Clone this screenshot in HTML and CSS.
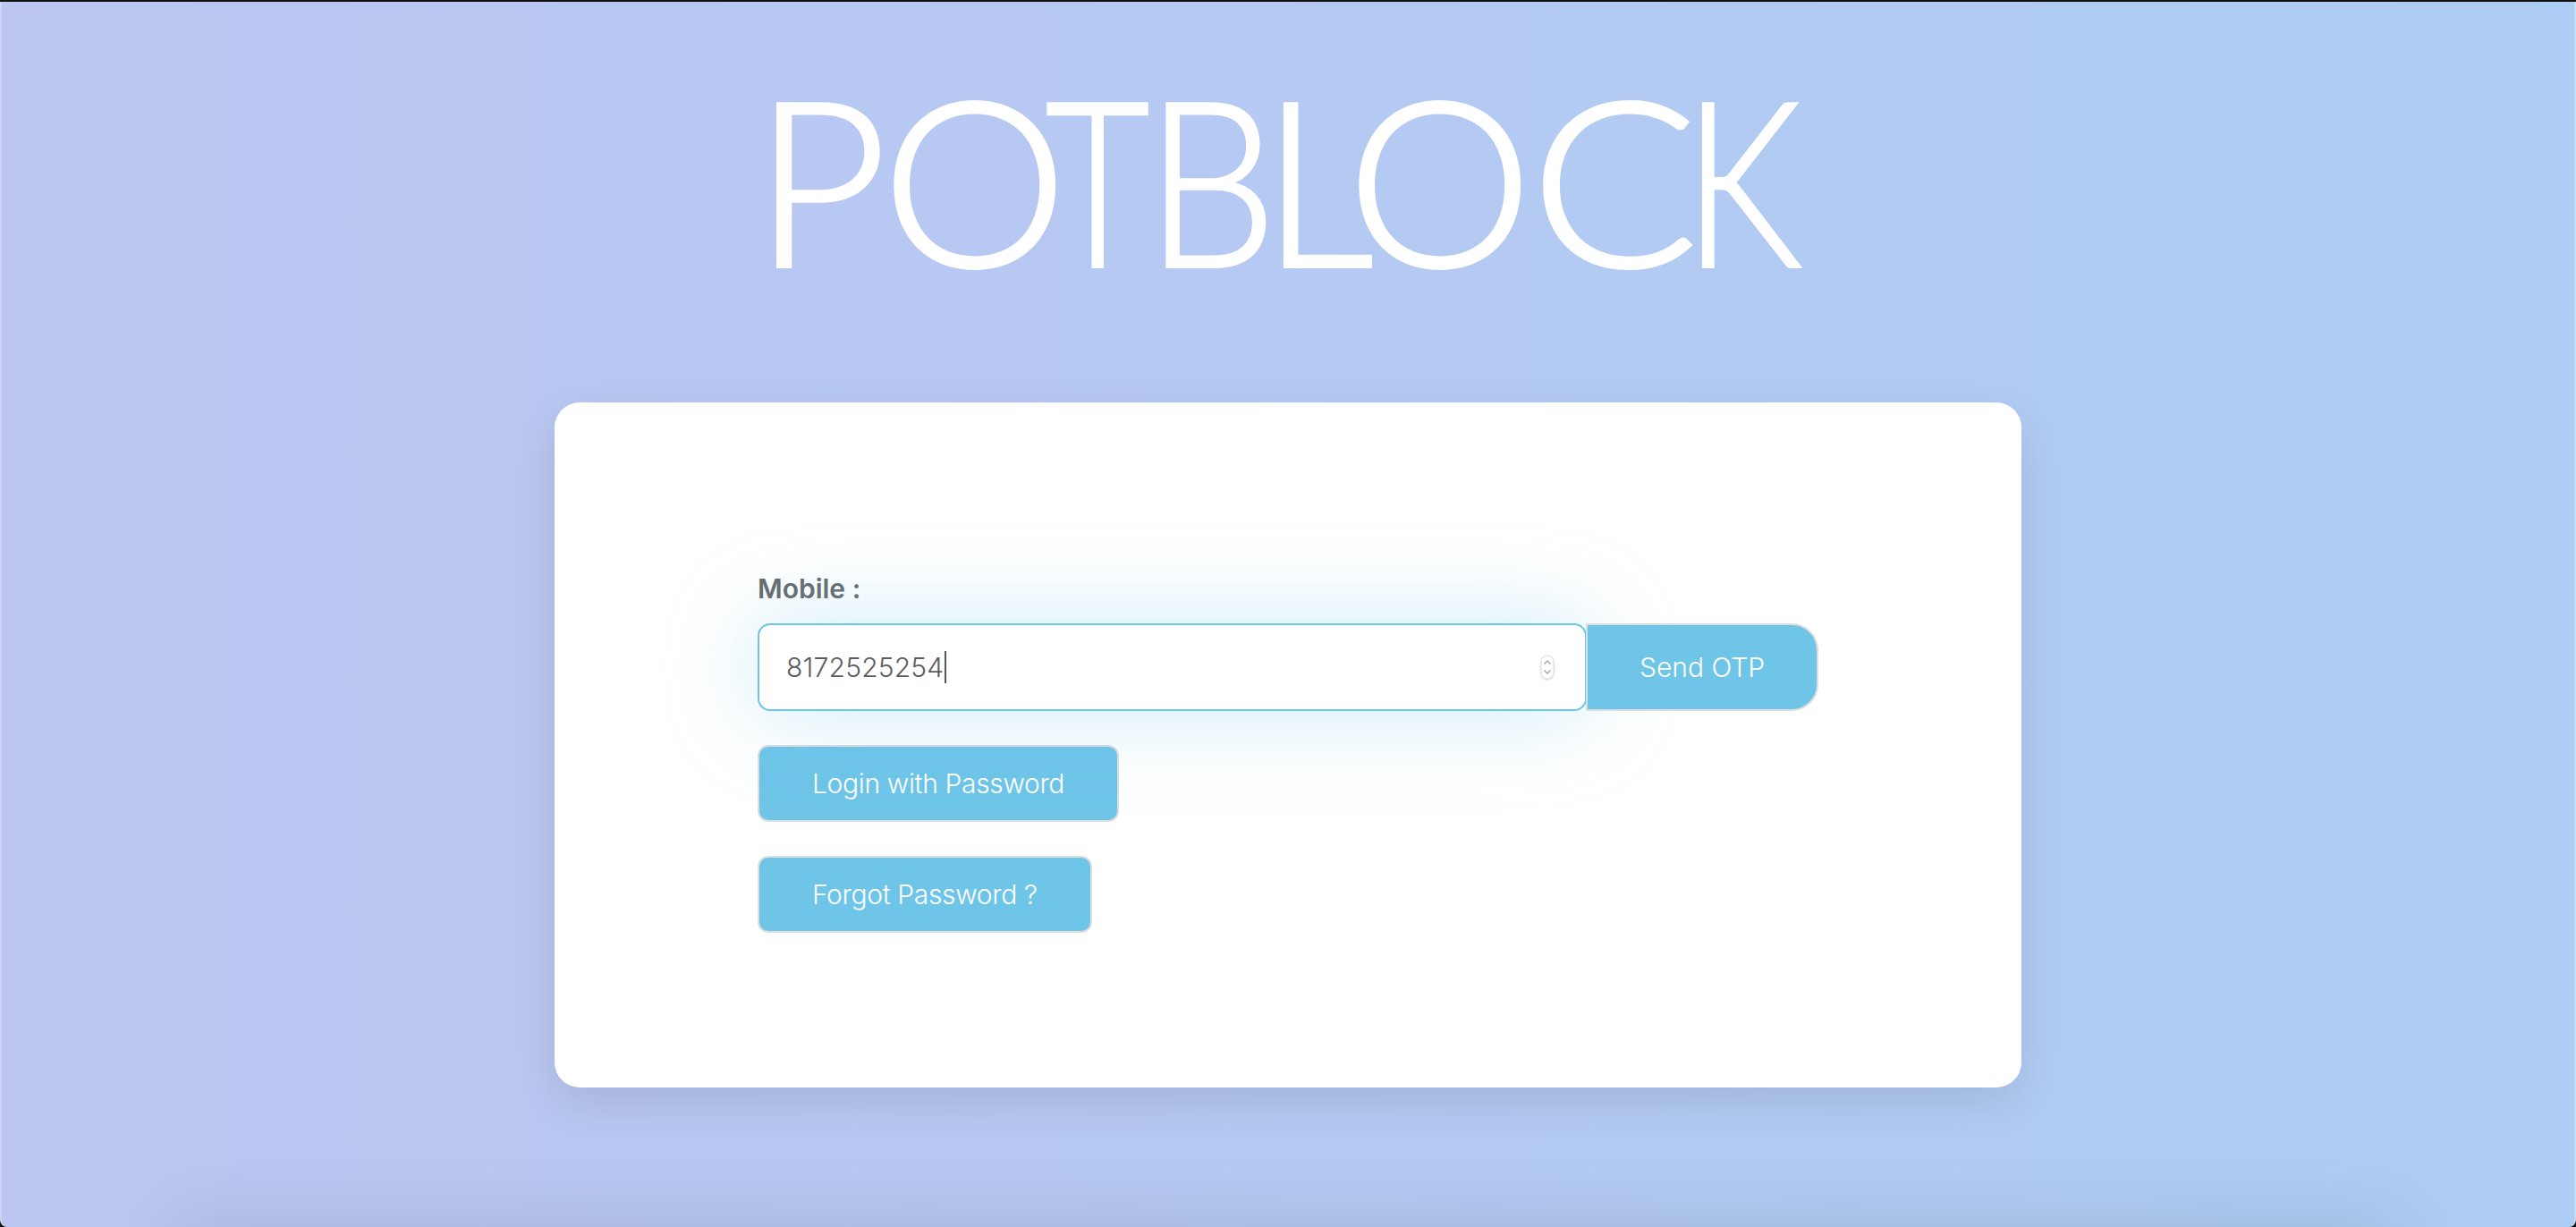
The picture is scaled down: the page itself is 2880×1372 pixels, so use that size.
FILE: index.html
```html
<!DOCTYPE html>
<html lang="en">
<head>
  <meta charset="UTF-8">
  <title>Potblock</title>
  <link rel="stylesheet" href="styles.css">
</head>
<body>
  <div class="page">
    <h1 class="brand"><span class="l-p">P</span><span class="l-o1">O</span><span class="l-t">T</span><span class="l-b">B</span><span class="l-l">L</span><span class="l-o2">O</span><span class="l-c">C</span><span class="l-k">K</span></h1>
    <div class="card">
      <label class="field-label">Mobile :</label>
      <div class="otp-row">
        <div class="mobile-input">
          <span class="mobile-value">8172525254</span><span class="caret"></span>
          <svg class="spinner" viewBox="0 0 16 28" width="16" height="28">
            <rect x="1" y="1" width="14" height="26" rx="7" fill="#fff" stroke="#dcdcdc" stroke-width="1"/>
            <path d="M4.500 10.500 8 7l3.500 3.500M4.500 17.500 8 21l3.500-3.500" fill="none" stroke="#a8a8a8" stroke-width="1.500"/>
          </svg>
        </div>
        <button class="btn btn-otp">Send OTP</button>
      </div>
      <button class="btn btn-block">Login with Password</button>
      <button class="btn btn-block">Forgot Password ?</button>
    </div>
    <div class="footer"></div>
  </div>
</body>
</html>
```

FILE: styles.css
```css
html, body {
  margin: 0;
  height: 100%;
  background: #111;
  overflow: hidden;
}
body {
  padding-top: 2px;
  box-sizing: border-box;
  font-family: Inter, "Liberation Sans", sans-serif;
}
.page {
  height: 100%;
  display: flex;
  flex-direction: column;
  align-items: center;
  overflow: hidden;
  border-left: 2px solid #cdd2f4;
  border-right: 2px solid #c3dbf7;
  border-radius: 0 0 8px 8px;
  box-sizing: border-box;
  background: linear-gradient(90deg, #bcc6f1, #aecdf4);
}
.brand {
  margin: 0;
  height: 448px;
  flex-shrink: 0;
  padding-left: 9px;
  line-height: 393px;
  font-family: Lato, sans-serif;
  font-size: 257px;
  font-weight: 300;
  color: #fff;
  -webkit-text-stroke: 4px #fff;
  white-space: nowrap;
}
.brand span {
  display: inline-block;
  transform-origin: left center;
}
.l-p { margin-right: -6px; }
.l-o1 { margin-right: -20px; transform: scaleX(1.02); }
.l-t { margin-right: -37px; transform: scaleX(0.78); }
.l-b { margin-right: -32px; transform: scaleX(0.9); }
.l-l { margin-right: -35px; transform: scaleX(0.96); }
.l-o2 { margin-right: 1px; transform: scaleX(1.02); }
.l-c { margin-right: -2px; transform: scaleX(1.08); }
.l-k { transform: scaleX(0.8); }
.card {
  width: 1640px;
  height: 766px;
  flex-shrink: 0;
  box-sizing: border-box;
  padding: 190px 227px 0;
  background: #fff;
  border-radius: 28px;
  box-shadow: 0 18px 50px rgba(0, 0, 0, 0.1);
}
.field-label {
  display: block;
  font-size: 30px;
  line-height: 36px;
  font-weight: 600;
  color: #666a6c;
  margin-bottom: 21px;
}
.otp-row {
  display: flex;
  height: 98px;
  margin-bottom: 38px;
}
.mobile-input {
  width: 927px;
  box-sizing: border-box;
  display: flex;
  align-items: center;
  padding: 0 34px 0 30px;
  background: #fff;
  border: 2px solid #6cc6e9;
  border-radius: 14px;
  box-shadow: 0 0 100px rgba(108, 198, 233, 0.35);
  font-size: 30px;
  font-weight: 300;
  letter-spacing: 0.2px;
  color: #5c5c5c;
}
.caret {
  width: 2px;
  height: 36px;
  margin-left: 1px;
  background: #555;
}
.spinner {
  margin-left: auto;
  filter: drop-shadow(0 1px 1px rgba(0, 0, 0, 0.15));
}
.btn {
  display: block;
  font-family: inherit;
  font-size: 30px;
  font-weight: 300;
  letter-spacing: -0.35px;
  color: #fff;
  background: #6ec5e8;
  border: 2px solid #ddd;
}
.btn-otp {
  width: 260px;
  margin-left: -1px;
  padding: 0;
  letter-spacing: 0;
  border-radius: 0 30px 30px 0;
}
.btn-block {
  height: 86px;
  padding: 0 59px;
  border-radius: 12px;
  margin-bottom: 38px;
}
.footer {
  width: 2480px;
  height: 100px;
  flex-shrink: 0;
  margin-top: 156px;
  box-shadow: 0 0 85px rgba(0, 0, 0, 0.12);
}
```
